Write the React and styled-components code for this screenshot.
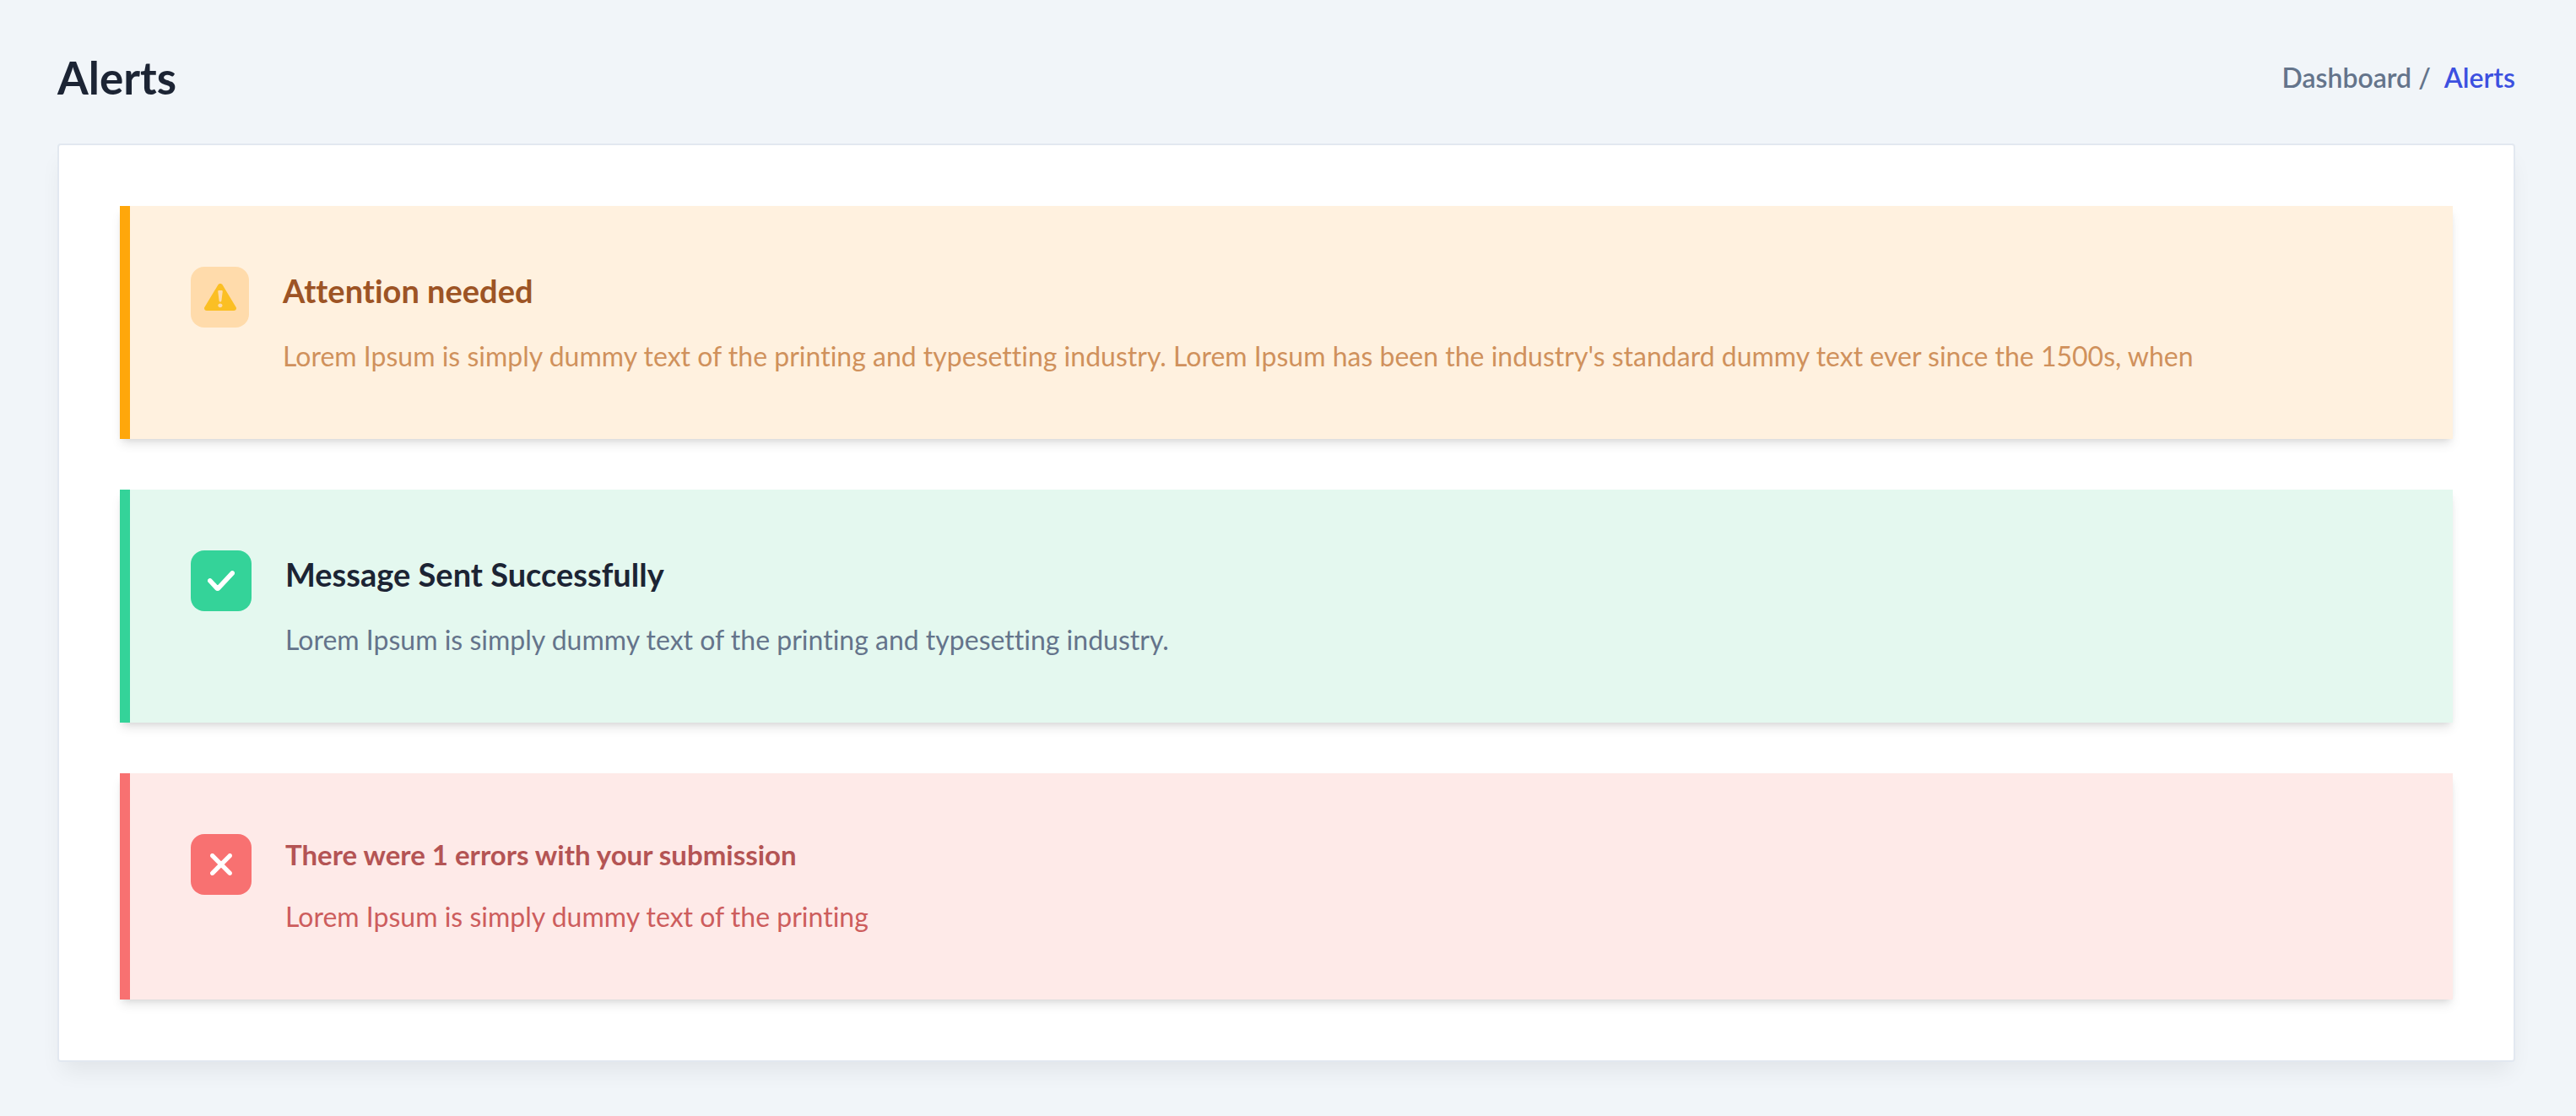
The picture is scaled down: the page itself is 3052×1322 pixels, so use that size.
import React from 'react';
import styled, { createGlobalStyle } from 'styled-components';

const GlobalStyle = createGlobalStyle`
  *, *::before, *::after { box-sizing: border-box; }
  body {
    margin: 0;
    background: #f1f5f9;
    color: #64748b;
    font-family: Lato, "Open Sans", "Liberation Sans", sans-serif;
    font-size: 32px;
    font-variant-ligatures: none;
    line-height: 48px;
  }
  h1, h2, p, ol { margin: 0; padding: 0; }
`;

const Page = styled.main`
  padding: 62px 72px 64px 68px;
`;

const Header = styled.header`
  display: flex;
  align-items: center;
  justify-content: space-between;
  gap: 24px;
  margin-bottom: 48px;
`;

const PageTitle = styled.h1`
  color: #1c2434;
  font-size: 53px;
  font-weight: 700;
  line-height: 60px;
`;

const Crumbs = styled.ol`
  display: flex;
  gap: 16px;
  list-style: none;
  font-weight: 600;
`;

const CrumbLink = styled.a`
  color: ${({ $current }) => ($current ? '#3c50e0' : '#64748b')};
  text-decoration: none;
`;

const Card = styled.section`
  display: flex;
  flex-direction: column;
  gap: 60px;
  padding: 72px;
  background: #fff;
  border: 2px solid #e2e8f0;
  border-radius: 4px;
  box-shadow: 0 16px 26px -6px rgba(0, 0, 0, 0.07);
`;

const AlertBox = styled.article`
  display: flex;
  align-items: flex-start;
  gap: 40px;
  padding: 72px;
  border-left: 12px solid ${({ $accent }) => $accent};
  background: ${({ $surface }) => $surface};
  box-shadow: 0 8px 12px -2px rgba(0, 0, 0, 0.1), 0 4px 8px -4px rgba(0, 0, 0, 0.1);
`;

const IconTile = styled.span`
  display: flex;
  flex: none;
  align-items: center;
  justify-content: center;
  width: ${({ $narrow }) => ($narrow ? 69 : 72)}px;
  height: 72px;
  border-radius: 16px;
  background: ${({ $fill }) => $fill};
`;

const AlertText = styled.div`
  display: flex;
  flex: 1;
  flex-direction: column;
  gap: 24px;
  min-width: 0;
`;

const AlertTitle = styled.h2`
  color: ${({ $color }) => $color};
  font-size: ${({ $small }) => ($small ? 33 : 38)}px;
  font-weight: 700;
  line-height: ${({ $small }) => ($small ? 48 : 56)}px;
`;

const AlertMessage = styled.p`
  color: ${({ $color }) => $color};
  line-height: 52px;
`;

const WarningIcon = () => (
  <svg width="38" height="32" viewBox="0 0 19 16" fill="none" aria-hidden="true">
    <path
      d="M1.50493 16H17.5023C18.6204 16 19.3413 14.9018 18.8354 13.9735L10.8367 0.770573C10.2852 -0.256858 8.70677 -0.256858 8.15528 0.770573L0.156617 13.9735C-0.334072 14.8998 0.386764 16 1.50493 16ZM10.7585 12.9298C10.7585 13.6155 10.2223 14.1433 9.45583 14.1433C8.6894 14.1433 8.15311 13.6155 8.15311 12.9298V12.9015C8.15311 12.2159 8.6894 11.688 9.45583 11.688C10.2223 11.688 10.7585 12.2159 10.7585 12.9015V12.9298ZM8.75236 4.01062H10.2548C10.6674 4.01062 10.9127 4.33826 10.8671 4.75288L10.2071 10.1186C10.1615 10.5049 9.88572 10.7455 9.50142 10.7455C9.11929 10.7455 8.84138 10.5028 8.79579 10.1186L8.13574 4.75288C8.09449 4.33826 8.33984 4.01062 8.75236 4.01062Z"
      fill="#fbbf24"
    />
  </svg>
);

const CheckIcon = () => (
  <svg width="32" height="24" viewBox="0 0 16 12" fill="none" aria-hidden="true">
    <path
      d="M15.2984 0.826822L15.2868 0.811827L15.2741 0.797751C14.9173 0.401867 14.3238 0.400754 13.9657 0.794406L5.91888 9.45376L2.05667 5.2868C1.69856 4.89287 1.10487 4.89389 0.747996 5.28987C0.417335 5.65675 0.417335 6.22337 0.747996 6.59026L0.747959 6.59029L0.752701 6.59541L4.86742 11.0348C5.14445 11.3405 5.52858 11.5 5.89581 11.5C6.29242 11.5 6.65178 11.3355 6.92401 11.035L15.2162 2.11161C15.5833 1.74452 15.576 1.18615 15.2984 0.826822Z"
      fill="#fff"
      stroke="#fff"
    />
  </svg>
);

const CrossIcon = () => (
  <svg width="26" height="26" viewBox="0 0 13 13" fill="none" aria-hidden="true">
    <path
      d="M6.4917 7.65579L11.106 12.2645C11.2545 12.4128 11.4715 12.5 11.6738 12.5C11.8762 12.5 12.0931 12.4128 12.2416 12.2645C12.5621 11.9445 12.5623 11.4317 12.2423 11.1114C12.2422 11.1113 12.2422 11.1113 12.2422 11.1113C12.242 11.1111 12.2418 11.1109 12.2416 11.1107L7.64539 6.50351L12.2589 1.91221L12.2595 1.91158C12.5802 1.59132 12.5802 1.07805 12.2595 0.757793C11.9393 0.437994 11.4268 0.437869 11.1064 0.757418C11.1063 0.757543 11.1062 0.757668 11.106 0.757793L6.49234 5.34931L1.89459 0.740581L1.89396 0.739942C1.57364 0.420019 1.0608 0.420019 0.740487 0.739944C0.42005 1.05999 0.419837 1.57279 0.73985 1.89309L6.4917 7.65579ZM6.4917 7.65579L1.89459 12.2639L1.89395 12.2645C1.74546 12.4128 1.52854 12.5 1.32616 12.5C1.12377 12.5 0.906853 12.4128 0.758361 12.2645L1.1117 11.9108L0.758358 12.2645C0.437984 11.9445 0.437708 11.4319 0.757539 11.1116C0.757812 11.1113 0.758086 11.111 0.75836 11.1107L5.33864 6.50287L0.740487 1.89373L6.4917 7.65579Z"
      fill="#fff"
      stroke="#fff"
    />
  </svg>
);

const alerts = [
  {
    title: 'Attention needed',
    message:
      "Lorem Ipsum is simply dummy text of the printing and typesetting industry. Lorem Ipsum has been the industry's standard dummy text ever since the 1500s, when",
    accent: '#ffa70b',
    surface: '#fff1df',
    tile: '#ffdbab',
    titleColor: '#9d5425',
    messageColor: '#d0915c',
    narrowTile: true,
    Icon: WarningIcon,
  },
  {
    title: 'Message Sent Successfully',
    message: 'Lorem Ipsum is simply dummy text of the printing and typesetting industry.',
    accent: '#34d399',
    surface: '#e4f8ef',
    tile: '#34d399',
    titleColor: '#1c2434',
    messageColor: '#64748b',
    Icon: CheckIcon,
  },
  {
    title: 'There were 1 errors with your submission',
    message: 'Lorem Ipsum is simply dummy text of the printing',
    accent: '#f87171',
    surface: '#feeae8',
    tile: '#f87171',
    titleColor: '#b45454',
    messageColor: '#cd5d5d',
    smallTitle: true,
    Icon: CrossIcon,
  },
];

export default function App() {
  return (
    <>
      <GlobalStyle />
      <Page>
        <Header>
          <PageTitle>Alerts</PageTitle>
          <nav aria-label="Breadcrumb">
            <Crumbs>
              <li>
                <CrumbLink href="#dashboard">Dashboard /</CrumbLink>
              </li>
              <li>
                <CrumbLink href="#alerts" $current aria-current="page">
                  Alerts
                </CrumbLink>
              </li>
            </Crumbs>
          </nav>
        </Header>
        <Card>
          {alerts.map(({ Icon, ...alert }) => (
            <AlertBox key={alert.title} $accent={alert.accent} $surface={alert.surface}>
              <IconTile $fill={alert.tile} $narrow={alert.narrowTile}>
                <Icon />
              </IconTile>
              <AlertText>
                <AlertTitle $color={alert.titleColor} $small={alert.smallTitle}>
                  {alert.title}
                </AlertTitle>
                <AlertMessage $color={alert.messageColor}>{alert.message}</AlertMessage>
              </AlertText>
            </AlertBox>
          ))}
        </Card>
      </Page>
    </>
  );
}
